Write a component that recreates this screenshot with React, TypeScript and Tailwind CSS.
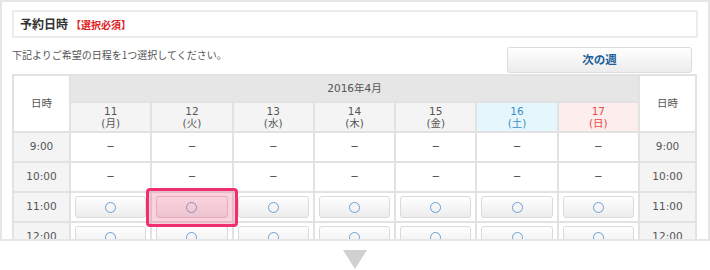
import React from 'react';

const days = [
  { d: '11', w: '月', kind: 'week' },
  { d: '12', w: '火', kind: 'week' },
  { d: '13', w: '水', kind: 'week' },
  { d: '14', w: '木', kind: 'week' },
  { d: '15', w: '金', kind: 'week' },
  { d: '16', w: '土', kind: 'sat' },
  { d: '17', w: '日', kind: 'sun' },
];

const rows = [
  { time: '9:00', open: false },
  { time: '10:00', open: false },
  { time: '11:00', open: true },
  { time: '12:00', open: true },
];

const font = { fontFamily: '"DejaVu Sans", "Noto Sans CJK JP", sans-serif' };
const jp = { fontFamily: '"Noto Sans CJK JP", sans-serif' };

const Slot: React.FC<{ picked?: boolean }> = ({ picked }) => (
  <div className="px-[4px] py-[3px]">
    <div
      className={
        picked
          ? 'h-[22px] rounded-[3px] border border-[#e8c6d3] bg-linear-to-b from-white to-[#ececec] flex items-center justify-center'
          : 'h-[22px] rounded-[3px] border border-[#dadada] bg-linear-to-b from-white to-[#ececec] flex items-center justify-center'
      }
    >
      <span className="block w-[11px] h-[11px] rounded-full border-[1.5px] border-[#6a9fd4]" />
    </div>
  </div>
);

const dayHead = (kind: string) => {
  if (kind === 'sat') return 'bg-[#e6f6fd] text-[#3a8fc8]';
  if (kind === 'sun') return 'bg-[#fdeeee] text-[#ef4646]';
  return 'bg-[#f4f4f4] text-[#555]';
};

export default function App() {
  return (
    <div className="w-[710px] h-[270px] bg-white" style={font}>
      <div className="h-[241px] border-2 border-[#e6e6e6] px-[10px] pt-[8px] overflow-hidden">
        <div className="h-[28px] border-2 border-[#ececec] flex items-center px-[6px]">
          <span className="text-[12px] font-bold text-[#333]" style={jp}>
            予約日時
          </span>
          <span className="ml-[3px] text-[10px] font-bold text-[#e0201c]" style={jp}>
            【選択必須】
          </span>
        </div>

        <div className="mt-[9px] flex justify-between items-start">
          <p className="text-[10px] leading-[14px] text-[#555] pt-[1px]" style={jp}>
            下記よりご希望の日程を1つ選択してください。
          </p>
          <button className="w-[185px] h-[26px] mr-[6px] rounded-[3px] border border-[#dcdcdc] bg-linear-to-b from-white to-[#ececec] text-[11.5px] font-bold text-[#215f9b]" style={jp}>
            次の週
          </button>
        </div>

        <table className="mt-[1px] w-[685px] table-fixed border-collapse text-[10.5px] text-[#555]">
          <colgroup>
            <col className="w-[57px]" />
            {days.map((d) => (
              <col key={d.d} />
            ))}
            <col className="w-[57px]" />
          </colgroup>
          <thead>
            <tr className="h-[27px]">
              <th rowSpan={2} className="border-2 border-[#e2e2e2] bg-white font-normal">
                日時
              </th>
              <th colSpan={7} className="border-2 border-[#e2e2e2] bg-[#e6e6e6] font-normal">
                2016年4月
              </th>
              <th rowSpan={2} className="border-2 border-[#e2e2e2] bg-white font-normal">
                日時
              </th>
            </tr>
            <tr className="h-[30px]">
              {days.map((d) => (
                <th key={d.d} className={`border-2 border-[#e2e2e2] font-normal leading-[12px] ${dayHead(d.kind)}`}>
                  {d.d}
                  <br />({d.w})
                </th>
              ))}
            </tr>
          </thead>
          <tbody>
            {rows.map((r) => (
              <tr key={r.time} className="h-[30px]">
                <td className="border-2 border-[#e2e2e2] bg-[#f4f4f4] text-center">{r.time}</td>
                {days.map((d, i) => (
                  <td key={d.d} className={`border-2 border-[#e2e2e2] text-center p-0 ${r.time === '11:00' && i === 1 ? 'relative' : ''}`}>
                    {r.open ? (
                      <Slot picked={r.time === '11:00' && i === 1} />
                    ) : (
                      <span className="text-[13px]" style={{ fontFamily: '"Liberation Sans", sans-serif' }}>
                        −
                      </span>
                    )}
                    {r.time === '11:00' && i === 1 && (
                      <div className="absolute -left-[6px] -right-[6px] -top-[5px] -bottom-[6px] z-10 rounded-[4px] border-[3px] border-[#ef2f6e] bg-[#f0507f]/25" />
                    )}
                  </td>
                ))}
                <td className="border-2 border-[#e2e2e2] bg-[#f4f4f4] text-center">{r.time}</td>
              </tr>
            ))}
          </tbody>
        </table>
      </div>

      <div className="flex justify-center pt-[9px]">
        <svg width="24" height="19" viewBox="0 0 24 19">
          <polygon points="0,0 24,0 12,19" fill="#d0d0d0" />
        </svg>
      </div>
    </div>
  );
}
